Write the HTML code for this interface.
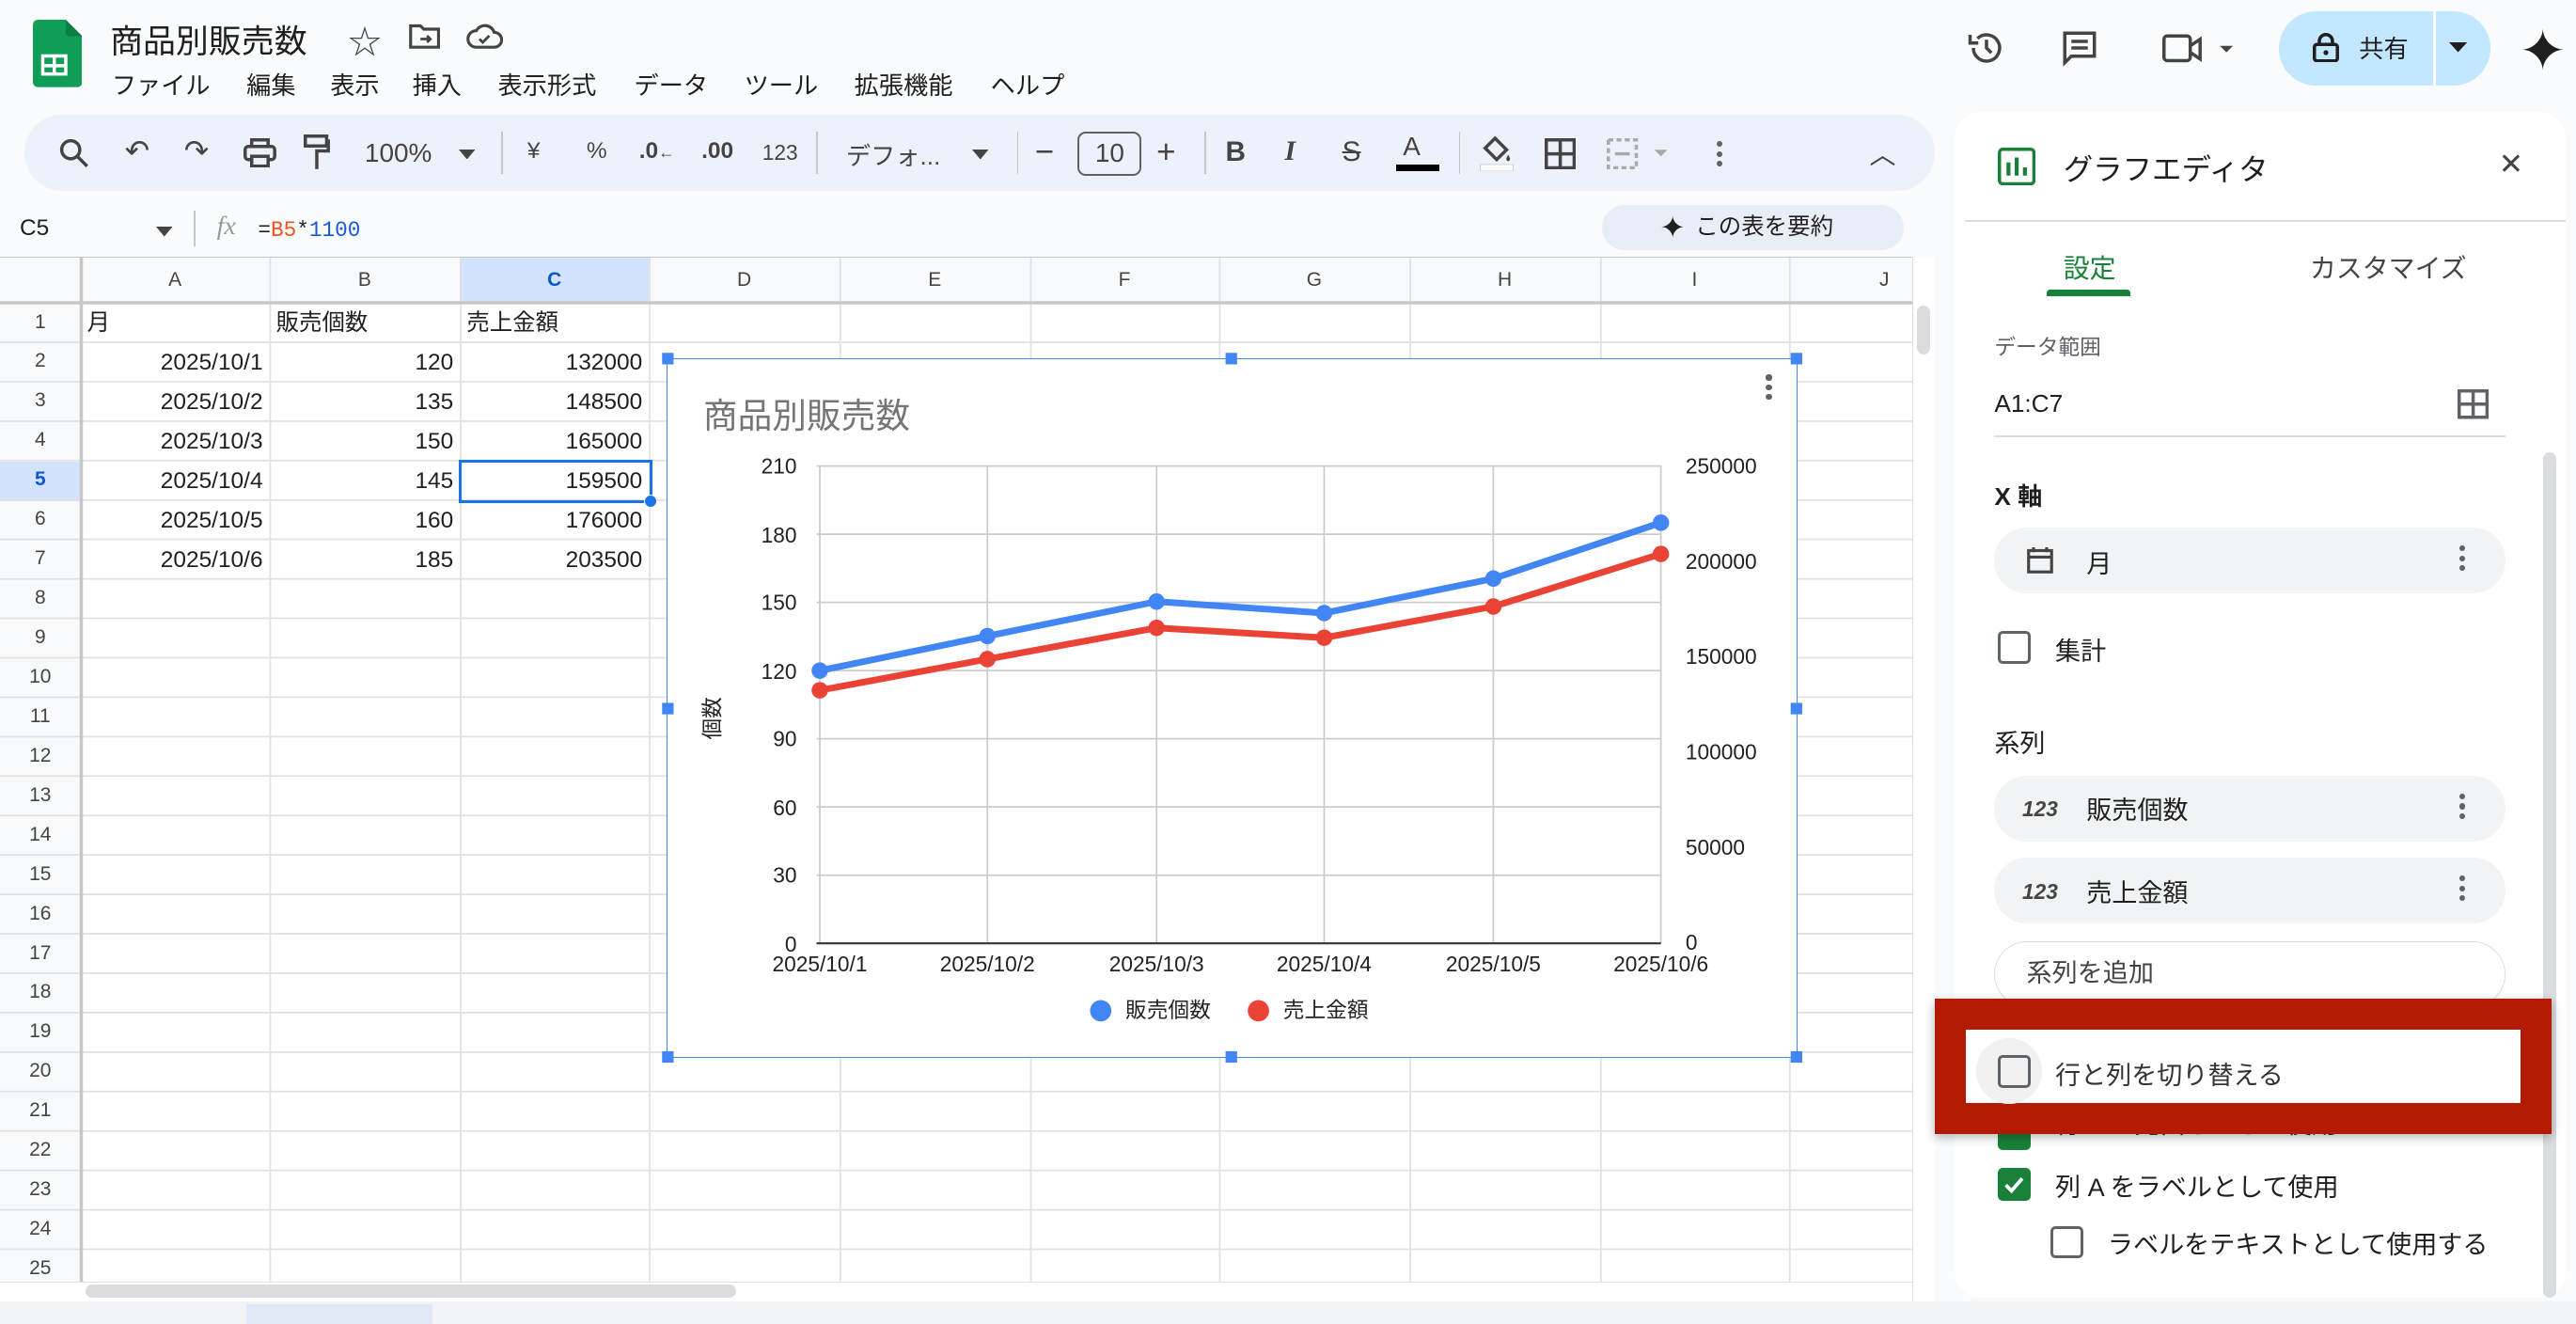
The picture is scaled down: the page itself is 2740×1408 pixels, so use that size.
<!DOCTYPE html>
<html><head><meta charset="utf-8">
<style>
*{box-sizing:border-box;margin:0;padding:0}
html,body{width:2740px;height:1408px;overflow:hidden;background:#f9fbfd}
#r{position:absolute;left:0;top:0;width:1568px;height:806px;zoom:1.7474;font-family:"Liberation Sans","Noto Sans CJK JP",sans-serif;color:#1f1f1f;background:#f9fbfd;overflow:hidden}
.a{position:absolute;white-space:nowrap}
.ic{position:absolute}
.cell{position:absolute;font-size:14px;line-height:24px;height:24px}
.rh{position:absolute;left:0;width:49px;text-align:center;font-size:12px;color:#444;line-height:24px}
.ch{position:absolute;top:157px;height:27px;text-align:center;font-size:12px;color:#444;line-height:27px}
.tb{position:absolute;top:84px;font-size:15px;color:#444}
.chip{position:absolute;left:1214px;width:311px;height:40px;border-radius:20px;background:#f1f3f4}
.cb{position:absolute;width:20px;height:20px;border:2px solid #5f6368;border-radius:3px}
.dots{position:absolute;width:4px}
.dots i{display:block;width:3.5px;height:3.5px;border-radius:50%;background:#5f6368;margin-bottom:2.5px}
</style></head><body><div id="r">

<!-- logo -->
<svg class="ic" style="left:20px;top:12px" width="30" height="41" viewBox="0 0 30 41"><path d="M3 0h17l10 10v28a3 3 0 0 1-3 3H3a3 3 0 0 1-3-3V3a3 3 0 0 1 3-3z" fill="#0f9d58"/><path d="M20 0l10 10H22a2 2 0 0 1-2-2z" fill="#087f45"/><rect x="5" y="21" width="16" height="13" fill="#fff"/><path d="M7 23h5v4H7zm7 0h5v4h-5zM7 29h5v3H7zm7 0h5v3h-5z" fill="#0f9d58"/></svg>
<div class="a" style="left:67px;top:9px;font-size:20px">商品別販売数</div>
<div class="a" style="left:212px;top:10px;font-size:20px;color:#444">☆</div>
<svg class="ic" style="left:249px;top:14px" width="20" height="17" viewBox="0 0 20 17"><path d="M1 2h6l2 2h9v11H1z" fill="none" stroke="#444" stroke-width="1.8"/><path d="M7 10h6m-2-2 2 2-2 2" stroke="#444" stroke-width="1.6" fill="none"/></svg>
<svg class="ic" style="left:284px;top:14px" width="22" height="16" viewBox="0 0 22 16"><path d="M6 15a5 5 0 0 1 0-10 6 6 0 0 1 11 1 4.5 4.5 0 0 1 0 9z" fill="none" stroke="#444" stroke-width="1.8"/><path d="M8 10l2 2 4-4" stroke="#444" stroke-width="1.6" fill="none"/></svg>
<div class="a" style="left:68px;top:40px;font-size:15px">ファイル</div>
<div class="a" style="left:150px;top:40px;font-size:15px">編集</div>
<div class="a" style="left:201px;top:40px;font-size:15px">表示</div>
<div class="a" style="left:251px;top:40px;font-size:15px">挿入</div>
<div class="a" style="left:303px;top:40px;font-size:15px">表示形式</div>
<div class="a" style="left:386px;top:40px;font-size:15px">データ</div>
<div class="a" style="left:453px;top:40px;font-size:15px">ツール</div>
<div class="a" style="left:520px;top:40px;font-size:15px">拡張機能</div>
<div class="a" style="left:603px;top:40px;font-size:15px">ヘルプ</div>

<!-- top right -->
<svg class="ic" style="left:1197px;top:17px" width="24" height="24" viewBox="0 0 24 24"><path d="M4 12a8 8 0 1 0 2.5-5.8" fill="none" stroke="#444" stroke-width="2"/><path d="M2 4v5h5" fill="none" stroke="#444" stroke-width="2"/><path d="M12 7v5l3 3" fill="none" stroke="#444" stroke-width="2"/></svg>
<svg class="ic" style="left:1254px;top:17px" width="24" height="24" viewBox="0 0 24 24"><path d="M3 3h18v14H7l-4 4z" fill="none" stroke="#444" stroke-width="2"/><path d="M7 8h10M7 12h10" stroke="#444" stroke-width="2"/></svg>
<svg class="ic" style="left:1316px;top:19px" width="46" height="22" viewBox="0 0 46 22"><rect x="1" y="3" width="16" height="15" rx="2" fill="none" stroke="#444" stroke-width="2"/><path d="M17 9l6-4v12l-6-4" fill="none" stroke="#444" stroke-width="2"/><path d="M35 9l4 4 4-4z" fill="#444"/></svg>
<div class="a" style="left:1387px;top:7px;width:129px;height:45px;border-radius:23px;background:#c2e7ff"></div>
<div class="a" style="left:1481px;top:7px;width:2px;height:45px;background:#f9fbfd"></div>
<svg class="ic" style="left:1408px;top:20px" width="16" height="18" viewBox="0 0 16 18"><rect x="1" y="7" width="14" height="10" rx="1.5" fill="none" stroke="#1f1f1f" stroke-width="2"/><path d="M4 7V5a4 4 0 0 1 8 0v2" fill="none" stroke="#1f1f1f" stroke-width="2"/><circle cx="8" cy="12" r="1.5" fill="#1f1f1f"/></svg>
<div class="a" style="left:1436px;top:18px;font-size:15px">共有</div>
<svg class="ic" style="left:1491px;top:26px" width="12" height="7"><path d="M0 0h11L5.5 6z" fill="#1f1f1f"/></svg>
<svg class="ic" style="left:1535px;top:17px" width="26" height="26" viewBox="0 0 26 26"><path d="M13 0C13 7 19 13 26 13 19 13 13 19 13 26 13 19 7 13 0 13 7 13 13 7 13 0z" fill="#1f1f1f"/></svg>

<!-- toolbar -->
<div class="a" style="left:15px;top:70px;width:1163px;height:46px;border-radius:23px;background:#edf2fa"></div>
<svg class="ic" style="left:36px;top:84px" width="18" height="18" viewBox="0 0 18 18"><circle cx="7" cy="7" r="5.5" fill="none" stroke="#444" stroke-width="2"/><path d="M11 11l6 6" stroke="#444" stroke-width="2"/></svg>
<div class="tb" style="left:76px;top:82px;font-size:18px">↶</div>
<div class="tb" style="left:112px;top:82px;font-size:18px">↷</div>
<svg class="ic" style="left:148px;top:84px" width="20" height="18" viewBox="0 0 20 18"><rect x="5" y="1" width="10" height="4" fill="none" stroke="#444" stroke-width="2"/><rect x="1" y="5" width="18" height="8" rx="2" fill="none" stroke="#444" stroke-width="2"/><rect x="5" y="11" width="10" height="6" fill="#edf2fa" stroke="#444" stroke-width="2"/></svg>
<svg class="ic" style="left:185px;top:82px" width="16" height="22" viewBox="0 0 16 22"><rect x="1" y="1" width="13" height="6" fill="none" stroke="#444" stroke-width="2"/><path d="M14 4h1v6H8v11" fill="none" stroke="#444" stroke-width="2"/></svg>
<div class="tb" style="left:222px;top:84px;font-size:16px">100%</div>
<svg class="ic" style="left:279px;top:91px" width="10" height="6"><path d="M0 0h10L5 6z" fill="#444"/></svg>
<div class="a" style="left:305px;top:80px;width:1px;height:26px;background:#c7c7c7"></div>
<div class="tb" style="left:321px;font-size:14px">¥</div>
<div class="tb" style="left:357px;font-size:14px">%</div>
<div class="tb" style="left:389px;font-size:14px;font-weight:bold">.0<span style="font-size:10px">←</span></div>
<div class="tb" style="left:427px;font-size:14px;font-weight:bold">.00</div>
<div class="tb" style="left:464px;font-size:13px;top:85px">123</div>
<div class="a" style="left:497px;top:80px;width:1px;height:26px;background:#c7c7c7"></div>
<div class="tb" style="left:515px;top:83px">デフォ...</div>
<svg class="ic" style="left:592px;top:91px" width="10" height="6"><path d="M0 0h10L5 6z" fill="#444"/></svg>
<div class="a" style="left:619px;top:80px;width:1px;height:26px;background:#c7c7c7"></div>
<div class="tb" style="left:630px;top:81px;font-size:20px">−</div>
<div class="a" style="left:656px;top:80px;width:39px;height:27px;border:1.5px solid #5f6368;border-radius:5px;text-align:center;font-size:16px;line-height:24px;color:#444">10</div>
<div class="tb" style="left:704px;top:81px;font-size:20px">+</div>
<div class="a" style="left:733px;top:80px;width:1px;height:26px;background:#c7c7c7"></div>
<div class="tb" style="left:746px;top:83px;font-size:17px;font-weight:bold">B</div>
<div class="tb" style="left:782px;top:83px;font-size:17px;font-style:italic;font-family:'Liberation Serif',serif;font-weight:bold">I</div>
<div class="tb" style="left:817px;top:83px;font-size:17px;text-decoration:line-through">S</div>
<div class="tb" style="left:854px;top:80px;font-size:16px">A</div>
<div class="a" style="left:850px;top:100px;width:26px;height:4px;background:#000"></div>
<div class="a" style="left:888px;top:80px;width:1px;height:26px;background:#c7c7c7"></div>
<svg class="ic" style="left:899px;top:80px" width="24" height="24" viewBox="0 0 24 24"><path d="M5 10l6-6 7 7-6 6z" fill="none" stroke="#444" stroke-width="2"/><path d="M19 14c1 2 2 3 0 4-2-1-1-2 0-4z" fill="#444"/><rect x="2" y="20" width="20" height="4" fill="#fff" stroke="#ccc" stroke-width=".5"/></svg>
<svg class="ic" style="left:940px;top:84px" width="19" height="19" viewBox="0 0 19 19"><path d="M1 1h17v17H1zM9.5 1v17M1 9.5h17" fill="none" stroke="#444" stroke-width="2"/></svg>
<svg class="ic" style="left:978px;top:84px" width="40" height="19" viewBox="0 0 40 19"><path d="M1 1h17v17H1z" fill="none" stroke="#aaa" stroke-width="2" stroke-dasharray="3 2"/><path d="M5 9.5h9" stroke="#aaa" stroke-width="2"/><path d="M29 7l4 4 4-4z" fill="#aaa"/></svg>
<div class="dots" style="left:1045px;top:86px"><i></i><i></i><i></i></div>
<div class="tb" style="left:1138px;top:82px;font-size:16px">︿</div>

<!-- formula bar -->
<div class="a" style="left:12px;top:131px;font-size:14px">C5</div>
<svg class="ic" style="left:95px;top:138px" width="10" height="6"><path d="M0 0h10L5 6z" fill="#444"/></svg>
<div class="a" style="left:118px;top:128px;width:1px;height:22px;background:#c7c7c7"></div>
<div class="a" style="left:132px;top:129px;font-size:16px;color:#999;font-style:italic;font-family:'Liberation Serif',serif">fx</div>
<div class="a" style="left:157px;top:133px;font-size:13px;font-family:'Liberation Mono',monospace">=<span style="color:#f4511e">B5</span>*<span style="color:#1a56db">1100</span></div>
<div class="a" style="left:975px;top:125px;width:184px;height:27px;border-radius:14px;background:#e9eef6;font-size:14px;line-height:27px;padding-left:57px">この表を要約</div>
<svg class="ic" style="left:1011px;top:131px" width="14" height="14" viewBox="0 0 26 26"><path d="M13 0C13 7 19 13 26 13 19 13 13 19 13 26 13 19 7 13 0 13 7 13 13 7 13 0z" fill="#1f1f1f"/></svg>

<!-- grid -->
<div class="a" style="left:0;top:156px;width:1164px;height:636px;background:#fff"></div>
<div class="a" style="left:0;top:156px;width:1164px;height:1px;background:#c7c7c7"></div>
<div class="a" style="left:0;top:157px;width:1164px;height:27px;background:#f8f9fa"></div>
<div class="a" style="left:0;top:157px;width:49px;height:635px;background:#f8f9fa"></div>
<div class="a" style="left:280px;top:157px;width:115px;height:27px;background:#d3e3fd"></div>
<div class="a" style="left:0;top:281px;width:49px;height:24px;background:#d3e3fd"></div>
<svg class="ic" style="left:0;top:157px" width="1164" height="635">
<g stroke="#e1e1e1" stroke-width="1">
<path d="M49.5 0V635M164.5 0V635M280.5 0V635M395.5 0V635M511.5 0V635M627.5 0V635M742.5 0V635M858.5 0V635M974.5 0V635M1089.5 0V635"/>
<path d="M0 27.5H1164M0 51.5H1164M0 75.5H1164M0 99.5H1164M0 123.5H1164M0 147.5H1164M0 171.5H1164M0 195.5H1164M0 219.5H1164M0 243.5H1164M0 267.5H1164M0 291.5H1164M0 315.5H1164M0 339.5H1164M0 363.5H1164M0 387.5H1164M0 411.5H1164M0 435.5H1164M0 459.5H1164M0 483.5H1164M0 507.5H1164M0 531.5H1164M0 555.5H1164M0 579.5H1164M0 603.5H1164"/>
</g>
<path d="M49.5 0V635M0 27.5H1164" stroke="#c7c7c7" stroke-width="2"/>
</svg>
<div class="ch" style="left:49px;width:115px">A</div><div class="ch" style="left:164px;width:116px">B</div><div class="ch" style="left:280px;width:115px;font-weight:bold;color:#0b57d0">C</div><div class="ch" style="left:395px;width:116px">D</div><div class="ch" style="left:511px;width:116px">E</div><div class="ch" style="left:627px;width:115px">F</div><div class="ch" style="left:742px;width:116px">G</div><div class="ch" style="left:858px;width:116px">H</div><div class="ch" style="left:974px;width:115px">I</div><div class="ch" style="left:1089px;width:116px">J</div>
<div class="rh" style="top:184px">1</div><div class="rh" style="top:208px">2</div><div class="rh" style="top:232px">3</div><div class="rh" style="top:256px">4</div><div class="rh" style="top:280px;font-weight:bold;color:#0b57d0">5</div><div class="rh" style="top:304px">6</div><div class="rh" style="top:328px">7</div><div class="rh" style="top:352px">8</div><div class="rh" style="top:376px">9</div><div class="rh" style="top:400px">10</div><div class="rh" style="top:424px">11</div><div class="rh" style="top:448px">12</div><div class="rh" style="top:472px">13</div><div class="rh" style="top:496px">14</div><div class="rh" style="top:520px">15</div><div class="rh" style="top:544px">16</div><div class="rh" style="top:568px">17</div><div class="rh" style="top:592px">18</div><div class="rh" style="top:616px">19</div><div class="rh" style="top:640px">20</div><div class="rh" style="top:664px">21</div><div class="rh" style="top:688px">22</div><div class="rh" style="top:712px">23</div><div class="rh" style="top:736px">24</div><div class="rh" style="top:760px">25</div>
<div class="cell" style="left:53px;top:185px">月</div><div class="cell" style="left:168px;top:185px">販売個数</div><div class="cell" style="left:284px;top:185px">売上金額</div>
<div class="cell" style="left:49px;width:111px;text-align:right;top:209px">2025/10/1</div><div class="cell" style="left:164px;width:112px;text-align:right;top:209px">120</div><div class="cell" style="left:280px;width:111px;text-align:right;top:209px">132000</div>
<div class="cell" style="left:49px;width:111px;text-align:right;top:233px">2025/10/2</div><div class="cell" style="left:164px;width:112px;text-align:right;top:233px">135</div><div class="cell" style="left:280px;width:111px;text-align:right;top:233px">148500</div>
<div class="cell" style="left:49px;width:111px;text-align:right;top:257px">2025/10/3</div><div class="cell" style="left:164px;width:112px;text-align:right;top:257px">150</div><div class="cell" style="left:280px;width:111px;text-align:right;top:257px">165000</div>
<div class="cell" style="left:49px;width:111px;text-align:right;top:281px">2025/10/4</div><div class="cell" style="left:164px;width:112px;text-align:right;top:281px">145</div><div class="cell" style="left:280px;width:111px;text-align:right;top:281px">159500</div>
<div class="cell" style="left:49px;width:111px;text-align:right;top:305px">2025/10/5</div><div class="cell" style="left:164px;width:112px;text-align:right;top:305px">160</div><div class="cell" style="left:280px;width:111px;text-align:right;top:305px">176000</div>
<div class="cell" style="left:49px;width:111px;text-align:right;top:329px">2025/10/6</div><div class="cell" style="left:164px;width:112px;text-align:right;top:329px">185</div><div class="cell" style="left:280px;width:111px;text-align:right;top:329px">203500</div>
<div class="a" style="left:279px;top:280px;width:118px;height:26px;border:2px solid #1a73e8"></div>
<div class="a" style="left:392px;top:301px;width:8px;height:8px;border-radius:50%;background:#1a73e8;border:1px solid #fff"></div>

<!-- vertical scrollbar / bottom -->
<div class="a" style="left:1164px;top:157px;width:14px;height:635px;background:#fff;border-left:1px solid #e1e1e1"></div>
<div class="a" style="left:1167px;top:186px;width:8px;height:30px;border-radius:4px;background:#dadce0"></div>
<div class="a" style="left:0;top:780px;width:1164px;height:12px;background:#fff;border-top:1px solid #e1e1e1"></div>
<div class="a" style="left:52px;top:782px;width:396px;height:8px;border-radius:4px;background:#dadce0"></div>
<div class="a" style="left:0;top:792px;width:1568px;height:14px;background:#f1f3f4"></div>
<div class="a" style="left:150px;top:794px;width:113px;height:12px;background:#e1e9f7"></div>

<!-- chart -->
<div class="a" style="left:406px;top:218px;width:688px;height:426px;background:#fff;border:1px solid #4285f4"></div>
<svg class="ic" style="left:400px;top:212px" width="700" height="438"><g fill="#4285f4">
<rect x="3" y="3" width="7" height="7"/><rect x="346" y="3" width="7" height="7"/><rect x="690" y="3" width="7" height="7"/><rect x="3" y="216" width="7" height="7"/><rect x="690" y="216" width="7" height="7"/><rect x="3" y="428" width="7" height="7"/><rect x="346" y="428" width="7" height="7"/><rect x="690" y="428" width="7" height="7"/></g></svg>
<div class="dots" style="left:1075px;top:228px"><i></i><i></i><i></i></div>
<div class="a" style="left:428px;top:236px;font-size:21px;color:#757575">商品別販売数</div>
<svg class="ic" style="left:400px;top:270px" width="690" height="360">
<g stroke="#ccc" stroke-width="1">
<path d="M97 13.5H611M97 55H611M97 96.5H611M97 138H611M97 179.5H611M97 221H611M97 262.5H611"/>
<path d="M99 13V304M201 13V304M304 13V304M406 13V304M509 13V304M611 13V304"/>
</g>
<path d="M97 304H611" stroke="#333" stroke-width="1.2"/>
<g font-size="13" fill="#222" text-anchor="end" font-family="Liberation Sans,sans-serif">
<text x="85" y="18">210</text><text x="85" y="60">180</text><text x="85" y="101">150</text><text x="85" y="143">120</text><text x="85" y="184">90</text><text x="85" y="226">60</text><text x="85" y="267">30</text><text x="85" y="309">0</text>
</g>
<g font-size="13" fill="#222" font-family="Liberation Sans,sans-serif">
<text x="626" y="18">250000</text><text x="626" y="76">200000</text><text x="626" y="134">150000</text><text x="626" y="192">100000</text><text x="626" y="250">50000</text><text x="626" y="308">0</text>
</g>
<g font-size="13" fill="#222" text-anchor="middle" font-family="Liberation Sans,sans-serif">
<text x="99" y="321">2025/10/1</text><text x="201" y="321">2025/10/2</text><text x="304" y="321">2025/10/3</text><text x="406" y="321">2025/10/4</text><text x="509" y="321">2025/10/5</text><text x="611" y="321">2025/10/6</text>
</g>
<text x="0" y="0" font-size="13" fill="#222" transform="translate(38 180) rotate(-90)" font-family="Noto Sans CJK JP,sans-serif">個数</text>
<polyline points="99,150 201,131 304,112 406,118 509,99 611,67" fill="none" stroke="#ea4335" stroke-width="4" stroke-linejoin="round"/>
<g fill="#ea4335"><circle cx="99" cy="150" r="5"/><circle cx="201" cy="131" r="5"/><circle cx="304" cy="112" r="5"/><circle cx="406" cy="118" r="5"/><circle cx="509" cy="99" r="5"/><circle cx="611" cy="67" r="5"/></g>
<polyline points="99,138 201,117 304,96 406,103 509,82 611,48" fill="none" stroke="#4285f4" stroke-width="4" stroke-linejoin="round"/>
<g fill="#4285f4"><circle cx="99" cy="138" r="5"/><circle cx="201" cy="117" r="5"/><circle cx="304" cy="96" r="5"/><circle cx="406" cy="103" r="5"/><circle cx="509" cy="82" r="5"/><circle cx="611" cy="48" r="5"/></g>
<circle cx="270" cy="345" r="6.5" fill="#4285f4"/><circle cx="366" cy="345" r="6.5" fill="#ea4335"/>
<text x="285" y="349" font-size="13" fill="#222" font-family="Noto Sans CJK JP,sans-serif">販売個数</text>
<text x="381" y="349" font-size="13" fill="#222" font-family="Noto Sans CJK JP,sans-serif">売上金額</text>
</svg>

<!-- side panel -->
<div class="a" style="left:1190px;top:68px;width:372px;height:722px;background:#fff;border-radius:16px"></div>
<svg class="ic" style="left:1216px;top:90px" width="23" height="23" viewBox="0 0 23 23"><rect x="1" y="1" width="21" height="21" rx="2" fill="none" stroke="#188038" stroke-width="2"/><path d="M6.5 9v8M11.5 6v11M16.5 12v5" stroke="#188038" stroke-width="2.4"/></svg>
<div class="a" style="left:1256px;top:89px;font-size:18px">グラフエディタ</div>
<div class="a" style="left:1521px;top:90px;font-size:18px;color:#444">✕</div>
<div class="a" style="left:1196px;top:134px;width:366px;height:1px;background:#dadce0"></div>
<div class="a" style="left:1256px;top:151px;font-size:16px;color:#188038">設定</div>
<div class="a" style="left:1246px;top:176px;width:51px;height:4px;border-radius:2px 2px 0 0;background:#188038"></div>
<div class="a" style="left:1406px;top:151px;font-size:16px;color:#444">カスタマイズ</div>
<div class="a" style="left:1214px;top:201px;font-size:13px;color:#5f6368">データ範囲</div>
<div class="a" style="left:1214px;top:237px;font-size:15px">A1:C7</div>
<svg class="ic" style="left:1496px;top:237px" width="19" height="18" viewBox="0 0 19 18"><path d="M1 1h17v16H1zM9.5 1v16M1 9h17" fill="none" stroke="#5f6368" stroke-width="2"/></svg>
<div class="a" style="left:1214px;top:265px;width:311px;height:1px;background:#dadce0"></div>
<div class="a" style="left:1548px;top:275px;width:8px;height:515px;border-radius:4px;background:#dadce0"></div>
<div class="a" style="left:1214px;top:290px;font-size:15px;font-weight:bold">X 軸</div>
<div class="chip" style="top:321px"></div>
<svg class="ic" style="left:1234px;top:333px" width="16" height="16" viewBox="0 0 16 16"><rect x="1" y="2" width="14" height="13" fill="none" stroke="#444" stroke-width="1.8"/><path d="M1 6h14M4 0v3M12 0v3" stroke="#444" stroke-width="1.8"/></svg>
<div class="a" style="left:1270px;top:331px;font-size:15.5px">月</div>
<div class="dots" style="left:1497px;top:332px"><i></i><i></i><i></i></div>
<div class="cb" style="left:1216px;top:384px"></div>
<div class="a" style="left:1251px;top:384px;font-size:15.5px">集計</div>
<div class="a" style="left:1214px;top:440px;font-size:15.5px">系列</div>
<div class="chip" style="top:472px"></div>
<div class="a" style="left:1231px;top:485px;font-size:13px;font-weight:bold;color:#444;font-style:italic">123</div>
<div class="a" style="left:1270px;top:481px;font-size:15.5px">販売個数</div>
<div class="dots" style="left:1497px;top:483px"><i></i><i></i><i></i></div>
<div class="chip" style="top:522px"></div>
<div class="a" style="left:1231px;top:535px;font-size:13px;font-weight:bold;color:#444;font-style:italic">123</div>
<div class="a" style="left:1270px;top:531px;font-size:15.5px">売上金額</div>
<div class="dots" style="left:1497px;top:533px"><i></i><i></i><i></i></div>
<div class="a" style="left:1214px;top:573px;width:311px;height:40px;border-radius:20px;border:1px solid #dadce0;font-size:15.5px;line-height:38px;padding-left:19px;color:#444">系列を追加</div>
<div class="cb" style="left:1216px;top:680px;background:#188038;border-color:#188038"></div>
<div class="a" style="left:1251px;top:672px;font-size:15.5px">行 1 を見出しとして使用</div>
<div class="cb" style="left:1216px;top:711px;background:#188038;border-color:#188038"></div>
<svg class="ic" style="left:1219px;top:714px" width="14" height="14" viewBox="0 0 14 14"><path d="M2 7l3.5 3.5L12 3" fill="none" stroke="#fff" stroke-width="2.2"/></svg>
<div class="a" style="left:1251px;top:710px;font-size:15.5px">列 A をラベルとして使用</div>
<div class="cb" style="left:1248px;top:746px"></div>
<div class="a" style="left:1283px;top:745px;font-size:15.5px">ラベルをテキストとして使用する</div>

<!-- red highlight -->
<div class="a" style="left:1178px;top:608px;width:375px;height:82px;border:19px solid #b31b00;background:#fff;box-shadow:0 2px 6px rgba(0,0,0,.3)"></div>
<div class="a" style="left:1203px;top:632px;width:40px;height:40px;border-radius:50%;background:#f1f1f1"></div>
<div class="cb" style="left:1216px;top:642px"></div>
<div class="a" style="left:1251px;top:642px;font-size:15.5px;color:#333">行と列を切り替える</div>

</div></body></html>
